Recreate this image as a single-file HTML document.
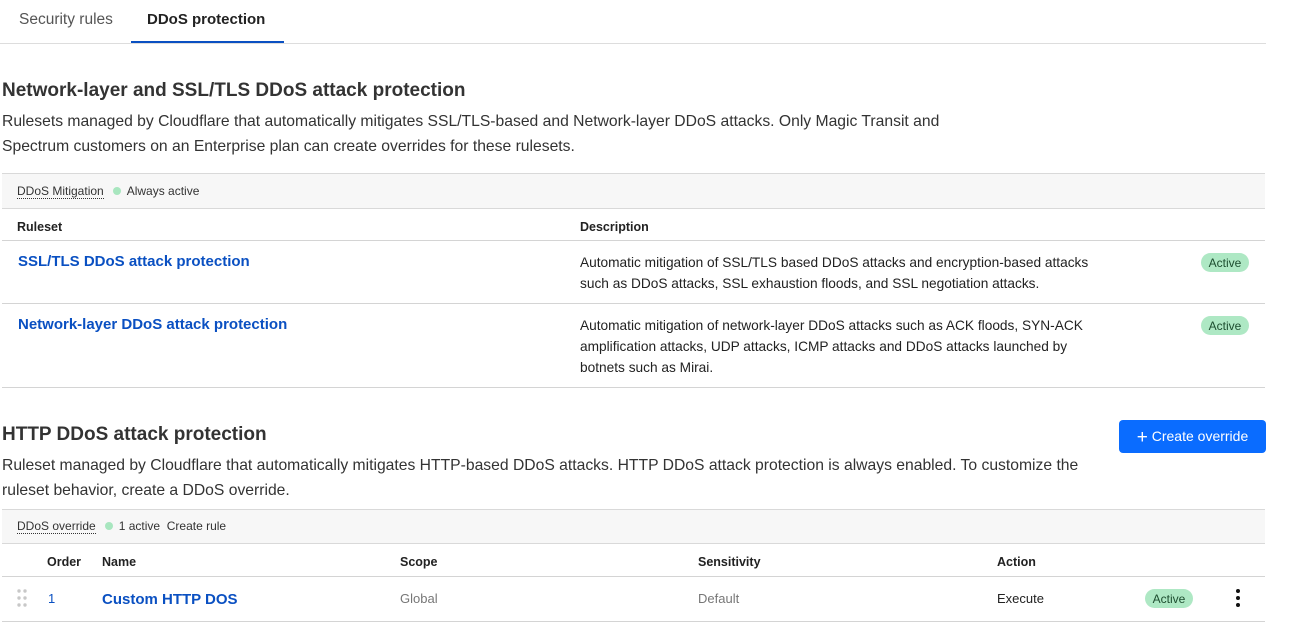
<!DOCTYPE html>
<html><head><meta charset="utf-8"><style>
*{margin:0;padding:0;box-sizing:border-box}
body{width:1304px;height:634px;background:#fff;font-family:"Liberation Sans",sans-serif;color:#222;position:relative;overflow:hidden}
.a{position:absolute;white-space:nowrap;line-height:1}
.hl{position:absolute;height:1px;background:#d4d4d4}
.bar{position:absolute;left:2px;width:1263px;background:#f7f7f7;border-top:1px solid #d9d9d9;border-bottom:1px solid #d9d9d9}
h2{position:absolute;font-size:19px;font-weight:bold;color:#333;line-height:1}
.p{position:absolute;font-size:15.7px;line-height:25px;color:#333;white-space:nowrap}
.link{color:#0a50c2;font-weight:bold;font-size:15px}
.sm{font-size:12px;color:#333}
.th{font-size:12.5px;font-weight:bold;color:#222}
.d{font-size:13.7px;line-height:21px;color:#222;position:absolute;white-space:nowrap}
.badge{position:absolute;background:#aee8c4;color:#1d4d2f;font-size:12px;border-radius:10px;width:48px;height:19px;display:flex;align-items:center;justify-content:center;line-height:1}
.dot{display:inline-block;width:8px;height:8px;border-radius:50%;background:#a8e6bf;margin:0 6px 0 9px;vertical-align:0}
.u{border-bottom:1px dotted #333}
</style></head><body>
<div class="a" style="left:19px;top:12px;font-size:15.5px;color:#555">Security rules</div>
<div class="a" style="left:147px;top:12px;font-size:15px;color:#222;font-weight:bold">DDoS protection</div>
<div class="hl" style="left:0;top:43px;width:1266px;background:#ddd"></div>
<div class="a" style="left:131px;top:41px;width:153px;height:2px;background:#0a50c2"></div>

<h2 style="left:2px;top:81px">Network-layer and SSL/TLS DDoS attack protection</h2>
<div class="p" style="left:2px;top:109px">Rulesets managed by Cloudflare that automatically mitigates SSL/TLS-based and Network-layer DDoS attacks. Only Magic Transit and<br>Spectrum customers on an Enterprise plan can create overrides for these rulesets.</div>

<div class="bar" style="top:173px;height:36px"></div>
<div class="a sm" style="left:17px;top:185px"><span class="u">DDoS Mitigation</span><span class="dot"></span>Always active</div>
<div class="a th" style="left:17px;top:221px">Ruleset</div>
<div class="a th" style="left:580px;top:221px">Description</div>
<div class="hl" style="left:2px;top:240px;width:1263px"></div>

<div class="a link" style="left:18px;top:254px">SSL/TLS DDoS attack protection</div>
<div class="d" style="left:580px;top:252px">Automatic mitigation of SSL/TLS based DDoS attacks and encryption-based attacks<br>such as DDoS attacks, SSL exhaustion floods, and SSL negotiation attacks.</div>
<div class="badge" style="left:1201px;top:253px">Active</div>
<div class="hl" style="left:2px;top:303px;width:1263px"></div>

<div class="a link" style="left:18px;top:317px">Network-layer DDoS attack protection</div>
<div class="d" style="left:580px;top:315px">Automatic mitigation of network-layer DDoS attacks such as ACK floods, SYN-ACK<br>amplification attacks, UDP attacks, ICMP attacks and DDoS attacks launched by<br>botnets such as Mirai.</div>
<div class="badge" style="left:1201px;top:316px">Active</div>
<div class="hl" style="left:2px;top:387px;width:1263px"></div>

<h2 style="left:2px;top:425px">HTTP DDoS attack protection</h2>
<div class="a" style="left:1119px;top:420px;width:147px;height:33px;background:#0a6cff;border-radius:4px;color:#fff;font-size:14px;line-height:33px;text-align:center"><span style="font-size:19px;vertical-align:-2px">+</span> Create override</div>
<div class="p" style="left:2px;top:453px">Ruleset managed by Cloudflare that automatically mitigates HTTP-based DDoS attacks. HTTP DDoS attack protection is always enabled. To customize the<br>ruleset behavior, create a DDoS override.</div>

<div class="bar" style="top:509px;height:35px"></div>
<div class="a sm" style="left:17px;top:520px"><span class="u">DDoS override</span><span class="dot"></span>1 active&nbsp;&nbsp;Create rule</div>
<div class="a th" style="left:47px;top:556px">Order</div>
<div class="a th" style="left:102px;top:556px">Name</div>
<div class="a th" style="left:400px;top:556px">Scope</div>
<div class="a th" style="left:698px;top:556px">Sensitivity</div>
<div class="a th" style="left:997px;top:556px">Action</div>
<div class="hl" style="left:2px;top:576px;width:1263px"></div>

<svg class="a" style="left:16px;top:588px" width="14" height="20"><g fill="#c8c8c8"><circle cx="3" cy="3" r="1.7"/><circle cx="9" cy="3" r="1.7"/><circle cx="3" cy="10" r="1.7"/><circle cx="9" cy="10" r="1.7"/><circle cx="3" cy="17" r="1.7"/><circle cx="9" cy="17" r="1.7"/></g></svg>
<div class="a" style="left:48px;top:592px;font-size:13px;color:#0a50c2">1</div>
<div class="a link" style="left:102px;top:592px">Custom HTTP DOS</div>
<div class="a" style="left:400px;top:592px;font-size:13px;color:#777">Global</div>
<div class="a" style="left:698px;top:592px;font-size:13px;color:#777">Default</div>
<div class="a" style="left:997px;top:592px;font-size:13px;color:#222">Execute</div>
<div class="badge" style="left:1145px;top:589px">Active</div>
<svg class="a" style="left:1234px;top:588px" width="8" height="20"><g fill="#111"><circle cx="4" cy="3" r="2"/><circle cx="4" cy="10" r="2"/><circle cx="4" cy="17" r="2"/></g></svg>
<div class="hl" style="left:2px;top:621px;width:1263px"></div>
</body></html>
